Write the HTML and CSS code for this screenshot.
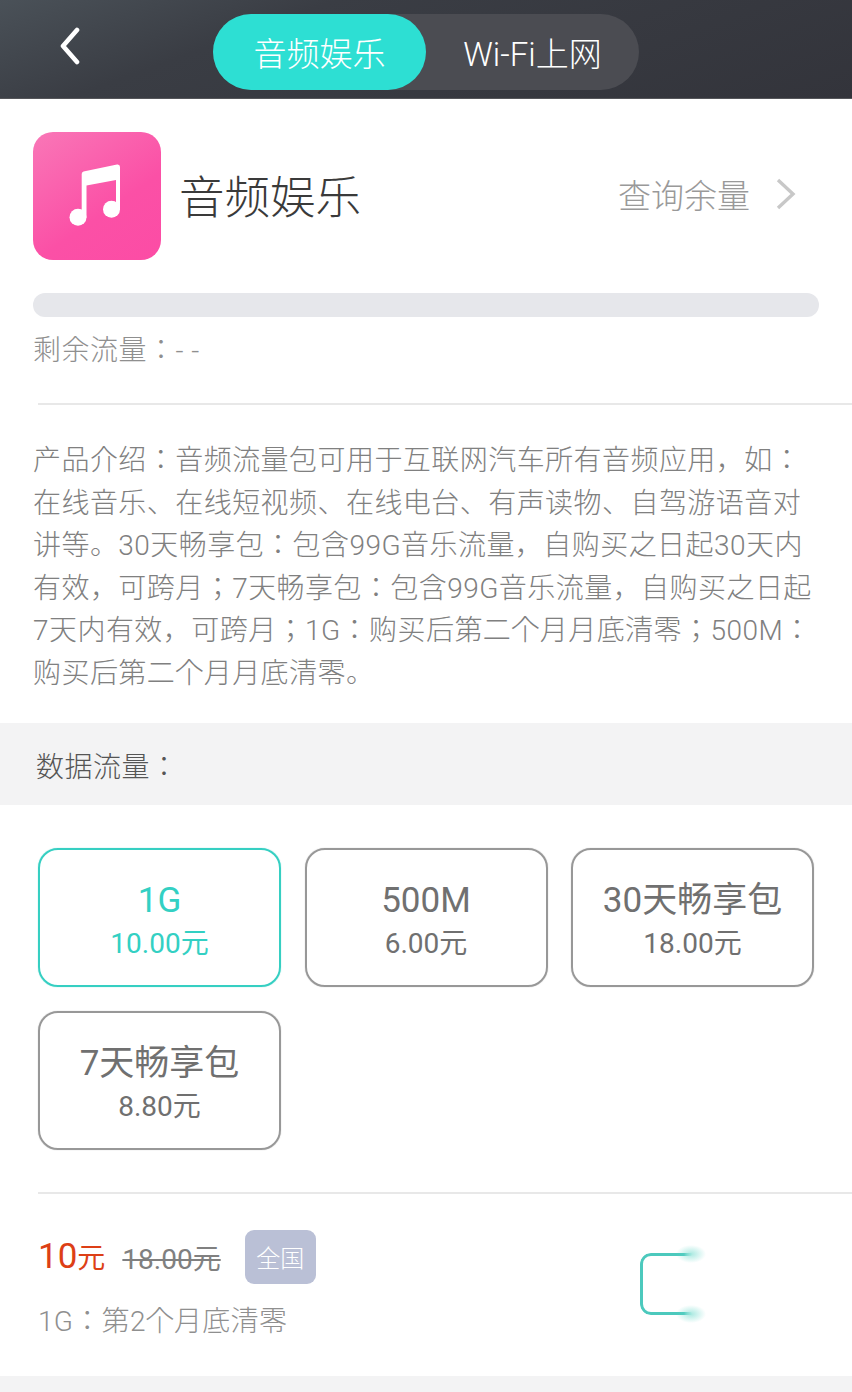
FILE: index.html
```html
<!DOCTYPE html>
<html>
<head>
<meta charset="utf-8">
<title>音频娱乐</title>
<link rel="stylesheet" href="styles.css">
</head>
<body>
<header class="topbar">
  <svg class="back" viewBox="0 0 24 38" aria-hidden="true"><path d="M18 3 L4 19 L18 35" fill="none" stroke="#fff" stroke-width="4.600" stroke-linecap="round" stroke-linejoin="round"/></svg>
  <div class="tabs">
    <div class="tab tab-active">音频娱乐</div>
    <div class="tab">Wi-Fi上网</div>
  </div>
</header>
<section class="product">
  <div class="app-row">
    <div class="app-icon">
      <svg viewBox="0 0 128 128" aria-hidden="true">
        <path fill="#fff" d="M48.700 42 Q48.700 40 50.500 39.500 L84 32.500 Q87 32 87 35 V77.500 H83 V48 L53.500 53.500 V85.500 H48.700 Z"/>
        <circle fill="#fff" cx="45" cy="85.300" r="8.500"/>
        <circle fill="#fff" cx="78.500" cy="77.300" r="8.500"/>
      </svg>
    </div>
    <h1 class="app-name">音频娱乐</h1>
    <div class="query">查询余量</div>
    <svg class="chev" viewBox="0 0 22 34" aria-hidden="true"><path d="M3 3 L18 17 L3 31" fill="none" stroke="#c8c8c8" stroke-width="3.400"/></svg>
  </div>
  <div class="bar"></div>
  <div class="remain">剩余流量：- -</div>
</section>
<hr class="rule">
<p class="intro">产品介绍：音频流量包可用于互联网汽车所有音频应用，如：在线音乐、在线短视频、在线电台、有声读物、自驾游语音对讲等。30天畅享包：包含99G音乐流量，自购买之日起30天内有效，可跨月；7天畅享包：包含99G音乐流量，自购买之日起7天内有效，可跨月；1G：购买后第二个月月底清零；500M：购买后第二个月月底清零。</p>
<div class="band">数据流量：</div>
<div class="plans">
  <div class="plan plan-active"><div class="plan-name">1G</div><div class="plan-price">10.00元</div></div>
  <div class="plan"><div class="plan-name">500M</div><div class="plan-price">6.00元</div></div>
  <div class="plan"><div class="plan-name">30天畅享包</div><div class="plan-price">18.00元</div></div>
  <div class="plan"><div class="plan-name">7天畅享包</div><div class="plan-price">8.80元</div></div>
</div>
<hr class="rule rule-plans">
<section class="summary">
  <div class="summary-text">
    <div class="price-row">
      <span class="price">10<small>元</small></span>
      <span class="old">18.00元</span>
      <span class="badge">全国</span>
    </div>
    <div class="note">1G：第2个月底清零</div>
  </div>
  <div class="buy"></div>
</section>
<div class="foot"></div>
</body>
</html>
```
FILE: styles.css
```css
* { box-sizing: border-box; }
html, body { margin: 0; padding: 0; }
body {
  width: 852px;
  height: 1392px;
  overflow: hidden;
  background: #fff;
  font-family: "Roboto", "Noto Sans CJK SC", sans-serif;
  color: #8f8f8f;
}
.topbar {
  height: 99px;
  display: flex;
  align-items: flex-start;
  padding: 14px 0 0 59px;
  background: linear-gradient(160deg, #4a5158 0%, #3a3d44 30%, #33343b 100%);
  border-bottom: 1px solid #55565a;
}
.back { width: 24px; height: 38px; margin-top: 13px; flex: none; }
.tabs {
  display: flex;
  width: 426px;
  height: 76px;
  margin-left: 130px;
  border-radius: 38px;
  background: #4b4c52;
}
.tab {
  flex: 1;
  display: flex;
  align-items: center;
  justify-content: center;
  font-size: 33px;
  font-weight: 300;
  color: #fff;
}
.tab-active { flex: none; width: 213px; border-radius: 38px; background: #2ddfd3; }
.product { padding: 33px 33px 0; }
.app-row { display: flex; align-items: center; height: 128px; }
.app-icon {
  width: 128px;
  height: 128px;
  border-radius: 20px;
  background: linear-gradient(145deg, #f977b7 0%, #fb50a6 60%, #fc4ca5 100%);
  flex: none;
}
.app-icon svg { display: block; width: 128px; height: 128px; }
.app-name { margin: 0 0 4px 18px; font-size: 45.500px; font-weight: 300; color: #3a3a3a; flex: 1; }
.query { font-size: 33px; font-weight: 300; color: #999; margin-bottom: 4px; }
.chev { width: 22px; height: 34px; margin: 0 22px 4px 25px; flex: none; }
.bar { height: 24px; margin-top: 33px; border-radius: 12px; background: #e6e7eb; }
.remain { margin-top: 16px; padding-top: 1px; font-family: "Roboto", "Noto Sans CJK JP", sans-serif; font-size: 28px; font-weight: 300; line-height: 34px; letter-spacing: .5px; }
.rule { margin: 35px 0 0 38px; border: 0; height: 2px; background: #e8e8e8; }
.intro {
  margin: 35px 0 0;
  padding: 0 33px;
  font-family: "Roboto", "Noto Sans CJK JP", sans-serif;
  font-size: 28px;
  font-weight: 300;
  line-height: 42.600px;
  letter-spacing: .45px;
  color: #808080;
}
.band {
  margin-top: 27px;
  height: 82px;
  padding: 3px 0 0 36px;
  display: flex;
  align-items: center;
  background: #f3f3f4;
  font-family: "Roboto", "Noto Sans CJK JP", sans-serif;
  font-size: 28px;
  font-weight: 300;
  letter-spacing: .5px;
  color: #555;
}
.plans {
  display: grid;
  grid-template-columns: repeat(3, 243px);
  gap: 24px 23.500px;
  padding: 43px 0 0 38px;
}
.plan {
  height: 139px;
  border: 2px solid #989898;
  box-shadow: 0 0 1px rgba(150, 150, 150, .8);
  border-radius: 20px;
  display: flex;
  flex-direction: column;
  align-items: center;
  padding-top: 27px;
  color: #707070;
}
.plan-name { font-size: 35px; line-height: 48px; }
.plan-price { font-size: 28px; line-height: 38px; }
.plan-active { border-color: #36cfc2; box-shadow: 0 0 1px rgba(54, 207, 194, .8); color: #33d0c3; }
.rule-plans { margin-top: 42px; }
.summary { display: flex; height: 182px; padding: 36px 0 0 38px; justify-content: space-between; }
.price-row { display: flex; align-items: center; height: 54px; }
.price { font-size: 35px; color: #dd3f16; }
.price small { font-size: 28px; }
.old { margin-left: 17px; font-size: 28px; color: #808080; text-decoration: line-through; }
.badge {
  margin-left: 24px;
  width: 71px;
  height: 54px;
  border-radius: 9px;
  background: #bac0d6;
  color: #fff;
  font-size: 24px;
  font-weight: 300;
  display: flex;
  align-items: center;
  justify-content: center;
}
.note { margin-top: 19px; font-family: "Roboto", "Noto Sans CJK JP", sans-serif; font-size: 28px; font-weight: 300; line-height: 38px; letter-spacing: .3px; }
.buy {
  position: relative;
  width: 150px;
  height: 62px;
  margin: 23px 62px 0 0;
}
.buy::before {
  content: "";
  position: absolute;
  inset: 0;
  border: 3px solid #4cc9bd;
  border-radius: 11px;
  -webkit-mask-image: linear-gradient(90deg, #000 0, #000 44px, transparent 52px);
  mask-image: linear-gradient(90deg, #000 0, #000 44px, transparent 52px);
}
.buy::after {
  content: "";
  position: absolute;
  inset: -8px auto -8px 36px;
  width: 30px;
  background:
    radial-gradient(ellipse 15px 9px at 50% 9px, rgba(100, 215, 200, .55), transparent),
    radial-gradient(ellipse 15px 9px at 50% calc(100% - 9px), rgba(100, 215, 200, .55), transparent);
}
.foot { height: 20px; background: #f3f3f4; }
```
